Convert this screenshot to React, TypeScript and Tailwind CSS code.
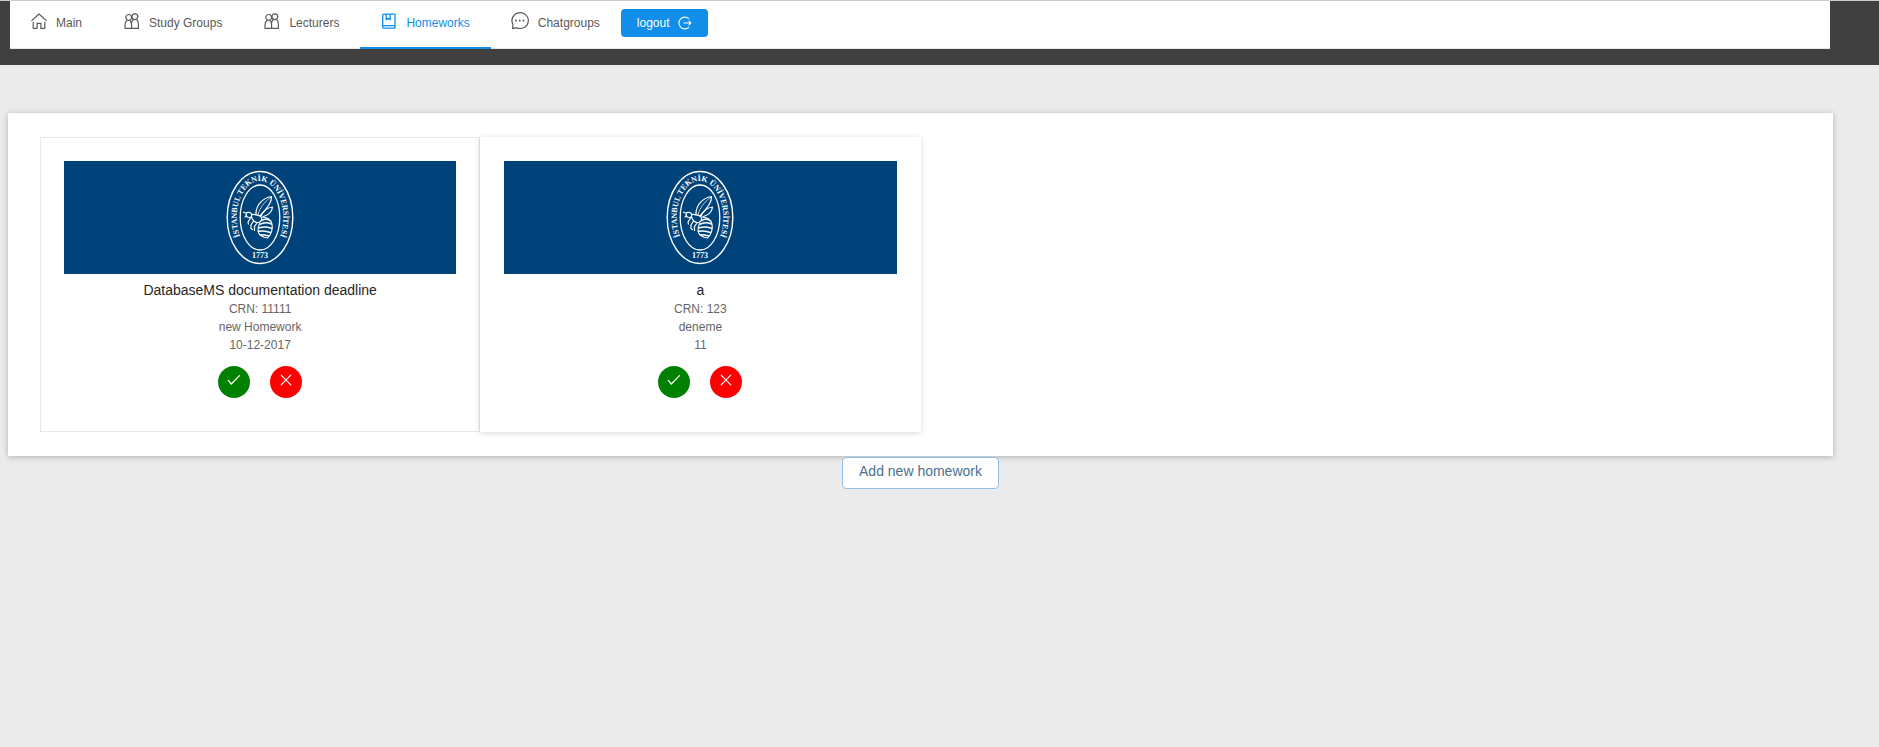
import type { ReactNode } from "react";

const stroke = {
  fill: "none",
  stroke: "currentColor",
  strokeLinecap: "round",
  strokeLinejoin: "round",
  "aria-hidden": true,
} as const;

function HomeIcon() {
  return (
    <svg {...stroke} width="16" height="16" viewBox="0 0 16 16" strokeWidth="1.2">
      <path d="M0.8 7.6 8 1l7.2 6.6M2.2 9.3v6h3.9v-5h3.8v5h3.9v-6" />
    </svg>
  );
}

function PeopleIcon() {
  return (
    <svg {...stroke} width="16" height="16" viewBox="0 0 16 16" strokeWidth="1.2">
      <circle cx="4.7" cy="4.4" r="2.9" />
      <circle cx="10.9" cy="3.7" r="2.9" />
      <path d="M3.2 7.3C1.6 8.4 1 10.2 1 12v3.3h6.6V12c0-2-.6-3.7-1.8-4.7M9.3 6.5c-1 .8-1.6 2.1-1.700 3.500M7.6 15.3h6.800V11.500c0-2.200-.5-4-2-5.200" />
    </svg>
  );
}

function BookIcon() {
  return (
    <svg {...stroke} width="16" height="16" viewBox="0 0 16 16" strokeWidth="1.3">
      <path d="M2.9 1.2H14v14H2.9A1.2 1.2 0 0 1 1.7 14V2.4c0-.7.5-1.2 1.2-1.2zM1.9 12.7H14M5.2 1.4v5.2l2-1.400 2 1.400V1.400" />
    </svg>
  );
}

function ChatIcon() {
  return (
    <svg {...stroke} width="17" height="18" viewBox="1 0 17 18" strokeWidth="1.2" overflow="visible">
      <path d="M1.900 12.300A8.200 7.900 0 1 1 5.600 15.700L1.600 16.700z" />
      <path d="M5 8.500h.1M8.700 8.500h.1M12.400 8.500h.1" strokeWidth="1.8" />
    </svg>
  );
}

function LogoutIcon() {
  return (
    <svg {...stroke} width="14" height="14" viewBox="0 0 14 14" strokeWidth="1.1">
      <path d="M10.8 2.6A5.9 5.9 0 1 0 10.8 11.4M6 7h6.8M11 5.2 12.8 7 11 8.8" />
    </svg>
  );
}

function CheckIcon() {
  return (
    <svg {...stroke} width="14" height="14" viewBox="0 0 14 14" strokeWidth="1.2">
      <path d="m1.3 7.4 3 3.6 8.2-8.4" />
    </svg>
  );
}

function CloseIcon() {
  return (
    <svg {...stroke} width="14" height="14" viewBox="0 0 14 14" strokeWidth="1.2">
      <path d="m2.2 2.2 9.6 9.6M11.8 2.2l-9.6 9.6" />
    </svg>
  );
}

function Seal({ id }: { id: string }) {
  return (
    <svg
      width="68"
      height="96"
      viewBox="0 0 68 96"
      fill="none"
      stroke="white"
      strokeLinecap="round"
      strokeLinejoin="round"
      role="img"
      aria-label="İstanbul Teknik Üniversitesi"
    >
      <defs>
        <path id={id} d="M34 84A23.3 36.5 0 0 1 34 11A23.3 36.5 0 0 1 34 84" />
      </defs>
      <ellipse cx="34" cy="47.5" rx="32.8" ry="46" strokeWidth="1.4" />
      <ellipse cx="34" cy="47.5" rx="19.8" ry="32.5" strokeWidth="1.3" />
      <text
        className="font-['Liberation_Serif',serif] text-[8px] font-bold"
        fill="white"
        stroke="none"
        textAnchor="middle"
      >
        <textPath href={`#${id}`} startOffset="50%">
          İSTANBUL TEKNİK ÜNİVERSİTESİ
        </textPath>
      </text>
      <text
        x="34"
        y="88"
        className="font-['Liberation_Serif',serif] text-[8px] font-bold"
        fill="white"
        stroke="none"
        textAnchor="middle"
      >
        1773
      </text>
      <g strokeWidth="1.2">
        <path d="M30 45C29.5 36 36 28 45.5 26.5 46 33 40 39 34 46" />
        <path d="M32 45C33 39 38 32 45 27" strokeWidth="0.7" />
        <path d="M35 46c3-6 7-8.5 11.5-9-.5 5-4 8-9 9.5" />
        <path d="M20 43.5c1-1.5 4.5-1.5 5.5.5s-.5 3.5-2.5 3.5-3-1.5-3-4zM20 43l-2.500-.8M20.500 45l-1.500 2" />
        <path d="M25.5 44.5c3-.5 8 .5 9.5 2.5s0 5-2.500 5.500-6-1.500-7-5.500M24.500 48l-2.500 4 .5 2M27.500 51l-2.500 4v3.500l1.500 1M31 53l-2.500 3.500v4" />
      </g>
      <path
        d="M36 47c4.5 0 9 2.5 10 7s-.5 10.5-4.5 14c-4.5-.5-9-3-9.5-7s1-6 2-8"
        strokeWidth="1.1"
      />
      <path
        d="M35.5 50.5c3-1.5 6-1.5 8.5 0M34.5 54.2c3.5-1.8 8-1.5 11 0M33.3 57.8c4-1.3 9-.8 12 .5M32.5 61.3c4-.8 9 0 12 1.2M34 64.8c3 0 6.5.5 9 1.2"
        strokeWidth="1.5"
      />
    </svg>
  );
}

interface NavItem {
  label: string;
  icon: ReactNode;
  active?: boolean;
}

const navItems: NavItem[] = [
  { label: "Main", icon: <HomeIcon /> },
  { label: "Study Groups", icon: <PeopleIcon /> },
  { label: "Lecturers", icon: <PeopleIcon /> },
  { label: "Homeworks", icon: <BookIcon />, active: true },
  { label: "Chatgroups", icon: <ChatIcon /> },
];

interface Homework {
  title: string;
  crn: string;
  description: string;
  deadline: string;
  raised?: boolean;
}

const homeworks: Homework[] = [
  {
    title: "DatabaseMS documentation deadline",
    crn: "11111",
    description: "new Homework",
    deadline: "10-12-2017",
  },
  { title: "a", crn: "123", description: "deneme", deadline: "11", raised: true },
];

function HomeworkCard({ homework }: { homework: Homework }) {
  const edge = homework.raised
    ? "relative shadow-[0_1px_6px_rgba(0,0,0,0.16)]"
    : "border border-[#e8e8e8]";
  const inset = homework.raised ? "p-6" : "p-[23px]";
  return (
    <article className={`w-1/4 bg-white ${edge} ${inset}`}>
      <div className="flex h-[113px] items-center justify-center bg-[#00427a]">
        <Seal id={`seal-${homework.crn}`} />
      </div>
      <div className="pt-1.5 text-center text-[12px] leading-[18px] text-[#666]">
        <h2 className="text-[14px] leading-5 text-[#262626]">{homework.title}</h2>
        <p>CRN: {homework.crn}</p>
        <p>{homework.description}</p>
        <p>{homework.deadline}</p>
      </div>
      <div className="mt-3 mb-2.5 flex justify-center gap-5 text-white">
        <button
          type="button"
          aria-label="Mark as done"
          className="flex size-8 items-center justify-center rounded-full bg-[#008000] pb-1"
        >
          <CheckIcon />
        </button>
        <button
          type="button"
          aria-label="Delete"
          className="flex size-8 items-center justify-center rounded-full bg-[#ff0000] pb-1"
        >
          <CloseIcon />
        </button>
      </div>
    </article>
  );
}

export default function App() {
  return (
    <div className="min-h-screen bg-[#ebebeb] font-['Liberation_Sans',Arial,sans-serif] text-[12px] text-[#595959]">
      <header className="border-t border-[#ccc] bg-[#404040] pr-[49px] pb-4 pl-2.5">
        <nav className="flex h-12 items-start border-b border-[#e8e8e8] bg-white">
          {navItems.map((item) => (
            <a
              key={item.label}
              href="#"
              aria-current={item.active ? "page" : undefined}
              className={`flex h-12 items-center gap-[9px] border-b-2 px-[21px] pb-[3px] ${
                item.active ? "border-[#108ee9] text-[#108ee9]" : "border-transparent"
              }`}
            >
              <span className="pb-1">{item.icon}</span>
              {item.label}
            </a>
          ))}
          <button
            type="button"
            className="mt-2 flex h-7 items-center gap-2 rounded bg-[#108ee9] px-4 text-white"
          >
            logout
            <LogoutIcon />
          </button>
        </nav>
      </header>
      <main className="pt-12 pr-[46px] pl-2">
        <section className="flex bg-white px-8 py-6 shadow-[0_1px_6px_rgba(0,0,0,0.25)]">
          {homeworks.map((homework) => (
            <HomeworkCard key={homework.crn} homework={homework} />
          ))}
        </section>
        <div className="flex justify-center pt-px">
          <button
            type="button"
            className="relative h-8 rounded border border-[#91bfe3] bg-white px-4 pb-1 text-[14px] text-[#49708f]"
          >
            Add new homework
          </button>
        </div>
      </main>
    </div>
  );
}
